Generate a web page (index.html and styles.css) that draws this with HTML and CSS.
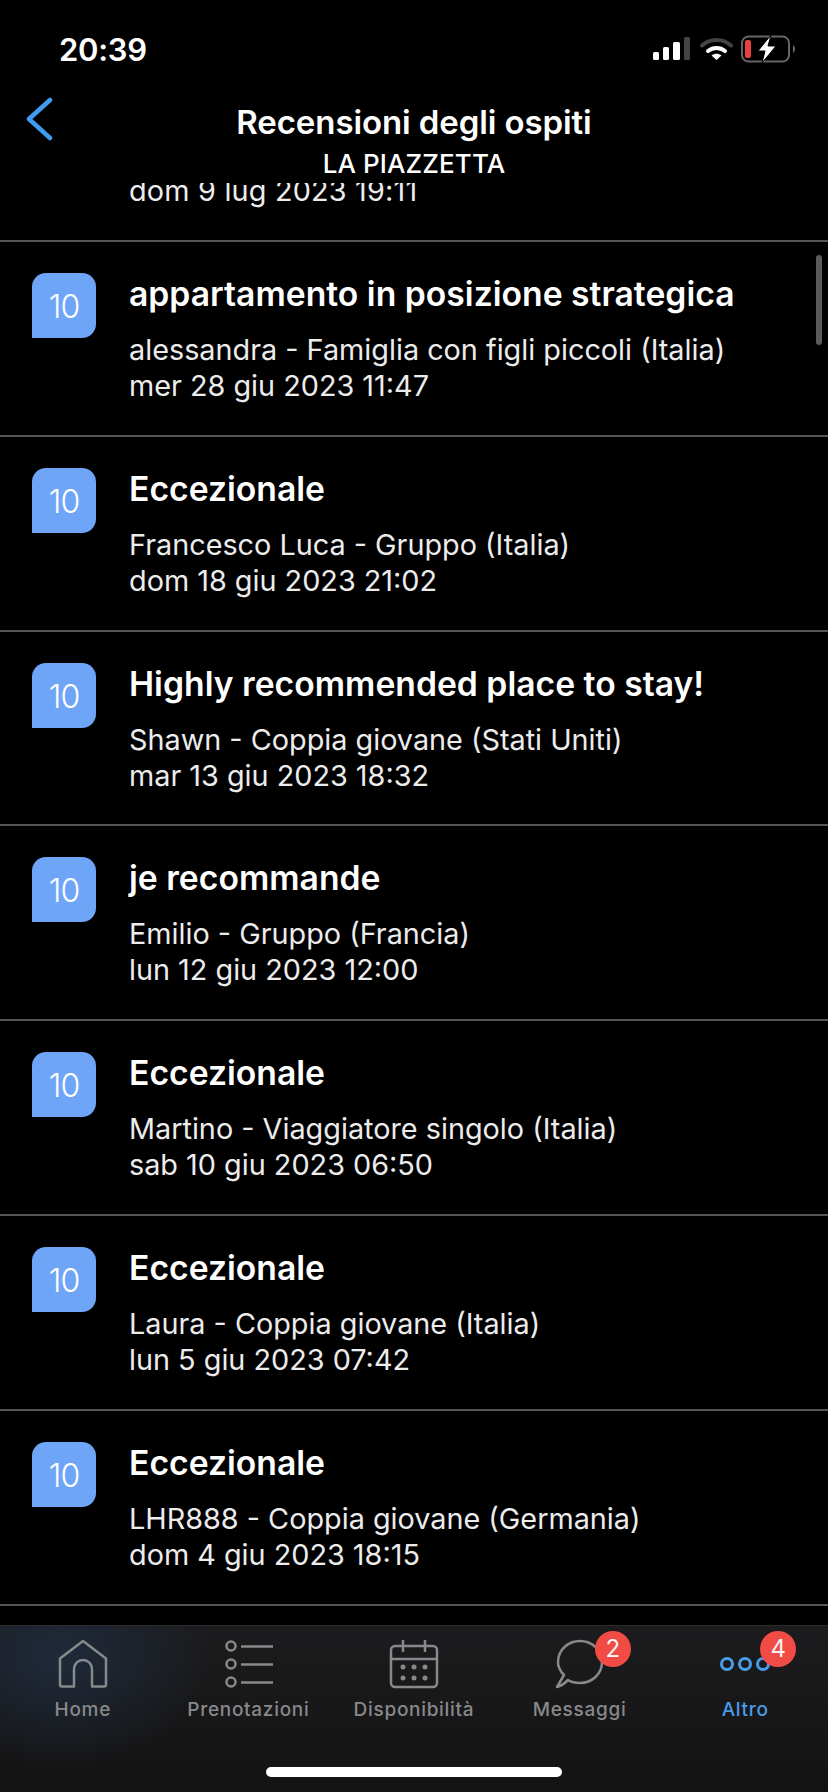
FILE: index.html
```html
<!DOCTYPE html>
<html lang="it">
<head>
<meta charset="utf-8">
<title>Recensioni degli ospiti</title>
<link rel="stylesheet" href="styles.css">
</head>
<body>
<div class="app">
  <header class="top">
    <div class="status">
      <span class="time">20:39</span>
      <div class="status-icons">
        <svg class="ic-signal" width="38" height="24" viewBox="0 0 38 24"><rect x="0" y="15" width="6" height="8" rx="1.5" fill="#fff"/><rect x="10" y="10" width="6" height="13" rx="1.5" fill="#fff"/><rect x="20" y="5" width="7" height="18" rx="1.5" fill="#fff"/><rect x="31" y="0" width="6" height="23" rx="1.5" fill="#444"/></svg>
        <svg class="ic-wifi" width="33" height="24" viewBox="0 0 33 24"><path d="M2 8.5C10 1 23 1 31 8.5" fill="none" stroke="#444" stroke-width="4" stroke-linecap="round"/><path d="M8 14C13 10 20 10 25 14" fill="none" stroke="#fff" stroke-width="4" stroke-linecap="round"/><path d="M16.500 23L11.500 18.500C14.500 16.300 18.500 16.300 21.500 18.500Z" fill="#fff"/></svg>
        <svg class="ic-batt" width="54" height="28" viewBox="0 0 54 28"><rect x="1" y="1.500" width="47" height="25" rx="6.500" fill="none" stroke="#666" stroke-width="2"/><rect x="4" y="5" width="6" height="18" rx="2" fill="#e8403c"/><path d="M52 10C53.500 11 54 12.500 54 14C54 15.500 53.500 17 52 18Z" fill="#666"/><path d="M30 0L17 16H24L21 28L35 11H27Z" fill="#fff" stroke="#000" stroke-width="1"/></svg>
      </div>
    </div>
    <div class="nav">
      <svg class="back" width="30" height="44" viewBox="0 0 30 44"><path d="M26 3L5 22L26 41" fill="none" stroke="#3f9cf0" stroke-width="4.500" stroke-linecap="round" stroke-linejoin="round"/></svg>
      <div class="nav-title">Recensioni degli ospiti</div>
      <div class="nav-sub">LA PIAZZETTA</div>
    </div>
  </header>

  <main class="list">
    <div class="scrollbar"></div>
    <div class="clip-row"><span class="line">dom 9 lug 2023 19:11</span></div>

    <article class="row">
      <div class="badge">10</div>
      <div class="body">
        <h2 class="title">appartamento in posizione strategica</h2>
        <p class="line">alessandra - Famiglia con figli piccoli (Italia)</p>
        <p class="line">mer 28 giu 2023 11:47</p>
      </div>
    </article>
    <article class="row">
      <div class="badge">10</div>
      <div class="body">
        <h2 class="title">Eccezionale</h2>
        <p class="line">Francesco Luca - Gruppo (Italia)</p>
        <p class="line">dom 18 giu 2023 21:02</p>
      </div>
    </article>
    <article class="row">
      <div class="badge">10</div>
      <div class="body">
        <h2 class="title">Highly recommended place to stay!</h2>
        <p class="line">Shawn - Coppia giovane (Stati Uniti)</p>
        <p class="line">mar 13 giu 2023 18:32</p>
      </div>
    </article>
    <article class="row">
      <div class="badge">10</div>
      <div class="body">
        <h2 class="title">je recommande</h2>
        <p class="line">Emilio - Gruppo (Francia)</p>
        <p class="line">lun 12 giu 2023 12:00</p>
      </div>
    </article>
    <article class="row">
      <div class="badge">10</div>
      <div class="body">
        <h2 class="title">Eccezionale</h2>
        <p class="line">Martino - Viaggiatore singolo (Italia)</p>
        <p class="line">sab 10 giu 2023 06:50</p>
      </div>
    </article>
    <article class="row">
      <div class="badge">10</div>
      <div class="body">
        <h2 class="title">Eccezionale</h2>
        <p class="line">Laura - Coppia giovane (Italia)</p>
        <p class="line">lun 5 giu 2023 07:42</p>
      </div>
    </article>
    <article class="row">
      <div class="badge">10</div>
      <div class="body">
        <h2 class="title">Eccezionale</h2>
        <p class="line">LHR888 - Coppia giovane (Germania)</p>
        <p class="line">dom 4 giu 2023 18:15</p>
      </div>
    </article>
  </main>

  <nav class="tabs">
    <div class="tab">
      <svg width="52" height="50" viewBox="0 0 52 50"><path d="M5 47.500C3.500 47.500 3 47 3 45.500V19.500L26 2L49 19.500V45.500C49 47 48.500 47.500 47 47.500H35V30A9 9 0 0 0 17 30V47.500Z" fill="none" stroke="#88898b" stroke-width="2.500" stroke-linejoin="round"/></svg>
      <span class="tab-label">Home</span>
    </div>
    <div class="tab">
      <svg width="52" height="50" viewBox="0 0 52 50"><g fill="none" stroke="#88898b"><circle cx="9" cy="7" r="4.500" stroke-width="2.500"/><circle cx="9" cy="25" r="4.500" stroke-width="2.500"/><circle cx="9" cy="43" r="4.500" stroke-width="2.500"/><path d="M19 7.500H51M19 25.500H51M19 43.500H51" stroke-width="2.500"/></g></svg>
      <span class="tab-label">Prenotazioni</span>
    </div>
    <div class="tab">
      <svg width="52" height="50" viewBox="0 0 52 50"><g fill="none" stroke="#88898b" stroke-width="2.500"><rect x="3" y="7" width="46" height="41" rx="4"/><path d="M3 20H49M15 1V13M37 1V13"/></g><g fill="#88898b"><circle cx="15" cy="28" r="2.500"/><circle cx="26" cy="28" r="2.500"/><circle cx="37" cy="28" r="2.500"/><circle cx="15" cy="39" r="2.500"/><circle cx="26" cy="39" r="2.500"/><circle cx="37" cy="39" r="2.500"/></g></svg>
      <span class="tab-label">Disponibilità</span>
    </div>
    <div class="tab">
      <svg width="52" height="50" viewBox="0 0 52 50"><path d="M3 48L10 36C6 32 4 28 4 23C4 11 14 2 26 2C38 2 48 11 48 23C48 35 38 44 26 44C21 44 17 43 14 41C11 44 7 47 3 48Z" fill="none" stroke="#88898b" stroke-width="2.500" stroke-linejoin="round"/></svg>
      <span class="tab-label">Messaggi</span>
      <span class="pill">2</span>
    </div>
    <div class="tab tab-on">
      <svg width="52" height="50" viewBox="0 0 52 50"><g fill="none" stroke="#4a9be8" stroke-width="3"><circle cx="8" cy="25" r="5.500"/><circle cx="26" cy="25" r="5.500"/><circle cx="44" cy="25" r="5.500"/></g></svg>
      <span class="tab-label">Altro</span>
      <span class="pill">4</span>
    </div>
    <div class="home-bar"></div>
  </nav>
</div>
</body>
</html>
```
FILE: styles.css
```css
* { box-sizing: border-box; }
html, body { margin: 0; padding: 0; background: #000; }
body { font-family: Inter, "Liberation Sans", sans-serif; color: #fff; }
.app { width: 828px; height: 1792px; display: flex; flex-direction: column; overflow: hidden; background: #000; }

.top { flex: none; height: 183px; background: #000; position: relative; z-index: 1; }
.status { height: 100px; display: flex; align-items: center; justify-content: space-between; padding: 0 33px 2px 59px; }
.time { font-size: 31px; font-weight: 600; letter-spacing: -0.3px; }
.status-icons { display: flex; align-items: center; gap: 8px; }
.ic-signal { margin-right: 1px; }

.nav { position: relative; height: 83px; padding-top: 3px; text-align: center; }
.back { position: absolute; left: 24px; top: -3px; }
.nav-title { font-size: 33px; font-weight: 600; line-height: 38px; letter-spacing: -0.1px; }
.nav-sub { font-size: 26px; font-weight: 500; line-height: 38px; margin-top: 4px; letter-spacing: 0.1px; }

.list { position: relative; flex: 1; min-height: 0; overflow: hidden; }
.scrollbar { position: absolute; left: 816px; top: 72px; width: 6px; height: 90px; border-radius: 3px; background: #5a5a5a; }
.clip-row { height: 59px; border-bottom: 2px solid #555; display: flex; align-items: flex-start; padding-left: 129px; overflow: hidden; }
.clip-row .line { margin-top: -10px; letter-spacing: 0.2px; }

.row { height: 194.8px; padding: 31px 0 0 32px; display: flex; gap: 33px; border-bottom: 2px solid #555; }
.badge { flex: none; width: 64px; height: 65px; background: #6fa5f7; border-radius: 14px 14px 14px 0; font-size: 32px; font-weight: 300; line-height: 67px; text-align: center; letter-spacing: -1px; }
.body { min-width: 0; padding-top: 3px; }
.title { margin: 0 0 20px; font-size: 33.700px; font-weight: 600; line-height: 36px; }
.line { margin: 0; font-size: 28.800px; font-weight: 400; line-height: 36px; color: #ececec; }

.tabs { position: relative; flex: none; height: 167px; display: flex; align-items: flex-start; padding-top: 13px; border-top: 1px solid #2a2a2a; background: radial-gradient(ellipse 150px 110px at 60px 30px, #1f2a3a 0%, rgba(31,42,58,0) 100%), linear-gradient(180deg, #1c1c1e, #131314); }
.tab { position: relative; flex: 1; display: flex; flex-direction: column; align-items: center; gap: 9px; }
.tab-label { font-size: 19px; font-weight: 500; line-height: 24px; color: #88898b; letter-spacing: 0.7px; white-space: nowrap; }
.tab-on .tab-label { color: #4a9be8; }
.pill { position: absolute; top: -8px; left: 98px; width: 36px; height: 36px; border-radius: 50%; background: #f04b45; font-size: 24px; line-height: 36px; text-align: center; color: #f4f4f4; }
.home-bar { position: absolute; left: 266px; top: 141px; width: 296px; height: 10px; border-radius: 5px; background: #fff; }
```
